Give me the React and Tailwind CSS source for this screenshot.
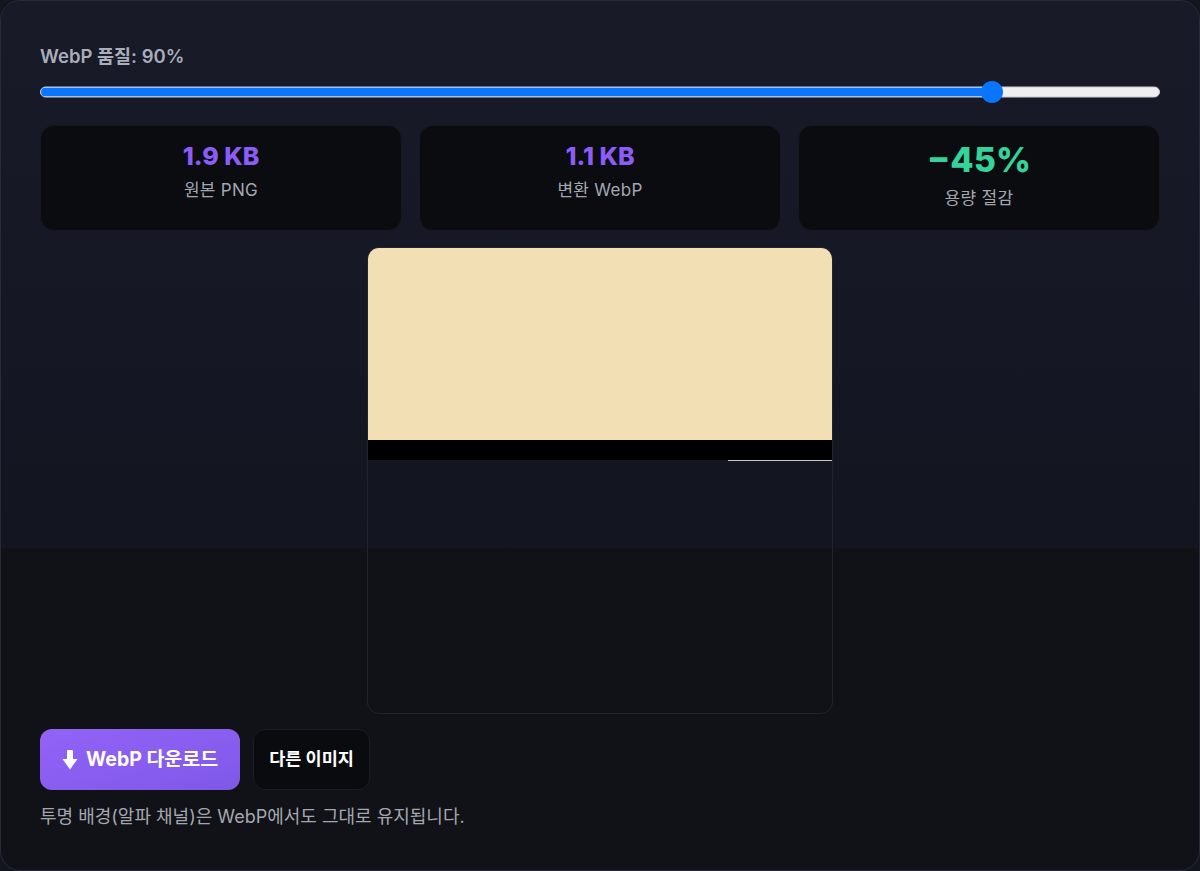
const stats = [
  { value: '1.9 KB', label: '원본 PNG', tone: 'text-[#8b5cf6] text-[25px] leading-[32px]' },
  { value: '1.1 KB', label: '변환 WebP', tone: 'text-[#8b5cf6] text-[25px] leading-[32px]' },
  { value: '−45%', label: '용량 절감', tone: 'text-[#34d399] text-[34px] leading-[40px]' },
]

const quality = 90
const minQ = 30
const maxQ = 100
const pct = ((quality - minQ) / (maxQ - minQ)) * 100

const QualitySlider = () => (
  <div className="relative mt-[14px] h-[22px]">
    <div className="absolute left-0 right-0 top-1/2 h-[11px] -translate-y-1/2 overflow-hidden rounded-full border border-[#c9cbd0] bg-[#efeff1]">
      <div className="h-full bg-[#0a75ff]" style={{ width: `${pct}%` }} />
    </div>
    <div
      className="absolute top-0 h-[22px] w-[22px] rounded-full bg-[#0a75ff]"
      style={{ left: `calc(${pct / 100} * (100% - 22px))` }}
    />
  </div>
)

const DownArrow = () => (
  <svg width="16" height="20" viewBox="0 0 16 20" fill="white" aria-hidden="true">
    <rect x="5" y="0" width="6" height="11" rx="1" />
    <path d="M0.5 9 H15.5 L8 19.5 Z" />
  </svg>
)

export default function App() {
  return (
    <div className="min-h-screen bg-[#14161f] font-['Inter','Noto_Sans_CJK_KR',sans-serif]">
      <div className="h-[871px] rounded-[20px] border border-[#272a39] bg-[linear-gradient(180deg,#181a28_0px,#151824_300px,#131621_547px,#111217_548px,#111217_100%)] px-[39px] pt-[44px]">
        <p className="text-[18.5px] font-semibold leading-[22px] text-[#a9aebb]">WebP 품질: {quality}%</p>

        <QualitySlider />

        <div className="mt-[22px] grid grid-cols-3 gap-[17px]">
          {stats.map((s) => (
            <div key={s.label} className="flex h-[106px] flex-col items-center rounded-[14px] border border-[#16181f] bg-[#0b0c10] pt-[14px]">
              <p className={`font-extrabold ${s.tone}`}>{s.value}</p>
              <p className="mt-[6px] text-[17px] leading-[24px] tracking-[0.3px] text-[#a3a7b1]">{s.label}</p>
            </div>
          ))}
        </div>

        <div className="mt-[16px] flex justify-center">
          <div className="flex h-[467px] w-[466px] flex-col overflow-hidden rounded-[12px] border border-[#22242c]">
            <div className="h-[192px] bg-[#f3dfb4]" />
            <div className="h-[20px] bg-black" />
            <div className="flex justify-end">
              <div className="h-px w-[104px] bg-[#c9c9cc]" />
            </div>
          </div>
        </div>

        <div className="mt-[15px] flex gap-[13px]">
          <button className="flex h-[61px] items-center gap-[8px] rounded-[12px] bg-gradient-to-br from-[#9263f7] to-[#7f58e8] px-[22px] text-[19.5px] font-bold text-white">
            <DownArrow />
            WebP 다운로드
          </button>
          <button className="h-[61px] rounded-[12px] border border-[#1b1d24] bg-[#0a0b0e] px-[15px] text-[17.5px] font-bold text-white">
            다른 이미지
          </button>
        </div>

        <p className="mt-[15px] text-[18px] leading-[24px] text-[#a3a7b1]">
          투명 배경(알파 채널)은 WebP에서도 그대로 유지됩니다.
        </p>
      </div>
    </div>
  )
}
